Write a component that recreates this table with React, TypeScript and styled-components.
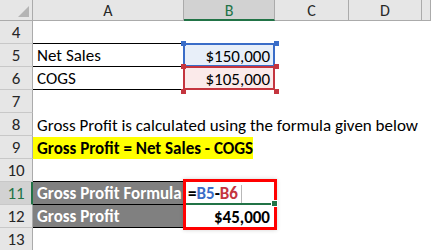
import React from 'react';
import styled, { createGlobalStyle, css } from 'styled-components';

/** Excel-like colours */
const C = {
  headerBg: '#e6e6e6',
  headerActiveBg: '#d2d2d2',
  headerLine: '#ababab',
  rowLine: '#c8c8c8',
  headerText: '#262626',
  green: '#217346',
  text: '#000000',
  blue: '#3a6dc8',
  blueFill: '#e8eff9',
  red: '#c4353f',
  redFill: '#fbeaea',
  gray: '#808080',
  yellow: '#ffff00',
  box: '#ff0000',
};

const FONT = `Calibri, Carlito, 'Liberation Sans', Arial, sans-serif`;

const GlobalStyle = createGlobalStyle`
  html, body {
    margin: 0;
    padding: 0;
    background: #ffffff;
    overflow: hidden;
  }
  body {
    font-family: ${FONT};
  }
`;

/** whole sheet */
const Sheet = styled.div`
  display: grid;
  grid-template-columns: 33px 151px 91px 74px 73px 9px;
  grid-template-rows: 21px repeat(10, 23px);
  width: 431px;
  height: 250px;
  overflow: hidden;
  font-family: ${FONT};
`;

/** top-left corner with the select-all triangle */
const Corner = styled.div`
  background: ${C.headerBg};
  border-right: 1px solid ${C.headerLine};
  border-bottom: 1px solid ${C.headerLine};
  box-sizing: border-box;
  display: flex;
  align-items: flex-end;
  justify-content: flex-end;
  padding: 0 3px 3px 0;
`;

const Triangle = styled.div`
  width: 0;
  height: 0;
  border-left: 11px solid transparent;
  border-bottom: 11px solid #b4b4b4;
`;

/** column header letter */
const ColHeader = styled.div<{ $active?: boolean }>`
  box-sizing: border-box;
  background: ${(p) => (p.$active ? C.headerActiveBg : C.headerBg)};
  border-right: 1px solid ${C.headerLine};
  border-bottom: ${(p) => (p.$active ? `2px solid ${C.green}` : `1px solid ${C.headerLine}`)};
  color: ${(p) => (p.$active ? C.green : C.headerText)};
  font-size: 16px;
  display: flex;
  align-items: center;
  justify-content: center;
  padding-top: ${(p) => (p.$active ? '1px' : '0')};
`;

/** row number */
const RowHeader = styled.div<{ $active?: boolean }>`
  box-sizing: border-box;
  background: ${(p) => (p.$active ? C.headerActiveBg : C.headerBg)};
  border-right: ${(p) => (p.$active ? `2px solid ${C.green}` : `1px solid ${C.headerLine}`)};
  border-bottom: 1px solid ${C.rowLine};
  color: ${(p) => (p.$active ? C.green : C.headerText)};
  font-size: 17px;
  display: flex;
  align-items: center;
  justify-content: center;
  padding-left: ${(p) => (p.$active ? '1px' : '0')};
`;

/** ordinary worksheet cell */
const Cell = styled.div<{
  $line?: boolean;
  $fill?: string;
  $bold?: boolean;
  $color?: string;
  $right?: boolean;
}>`
  position: relative;
  box-sizing: border-box;
  background: ${(p) => p.$fill ?? '#ffffff'};
  color: ${(p) => p.$color ?? C.text};
  font-size: 17px;
  font-weight: ${(p) => (p.$bold ? 700 : 400)};
  white-space: nowrap;
  overflow: visible;
  display: flex;
  align-items: center;
  justify-content: ${(p) => (p.$right ? 'flex-end' : 'flex-start')};
  padding: 1px 5px 0 4px;
  ${(p) =>
    p.$line &&
    css`
      border-bottom: 1px solid #000000;
    `}
`;

/** yellow highlighted formula label that spills into column B */
const Highlight = styled.span`
  background: ${C.yellow};
  font-weight: 700;
  display: flex;
  align-items: center;
  align-self: stretch;
  width: 232px;
  margin-left: -4px;
  padding-left: 4px;
  box-sizing: border-box;
  z-index: 1;
`;

/** coloured reference frame drawn while editing a formula */
const RefFrame = styled.div<{ $tone: string; $fillTone: string }>`
  position: absolute;
  top: -1px;
  left: -1px;
  right: 0;
  bottom: 0;
  border: 2px solid ${(p) => p.$tone};
  background: ${(p) => p.$fillTone};
  z-index: 0;
`;

const Handle = styled.div<{ $tone: string; $x: 'l' | 'r'; $y: 't' | 'b' }>`
  position: absolute;
  width: 5px;
  height: 5px;
  background: ${(p) => p.$tone};
  ${(p) => (p.$x === 'l' ? 'left: -3px;' : 'right: -4px;')}
  ${(p) => (p.$y === 't' ? 'top: -3px;' : 'bottom: -4px;')}
  z-index: 2;
`;

const CellText = styled.span`
  position: relative;
  z-index: 1;
`;

/** the cell being edited */
const EditCell = styled(Cell)`
  border-bottom: 2px solid ${C.green};
  padding-top: 2px;
  z-index: 2;
`;

const Ref = styled.span<{ $tone: string }>`
  color: ${(p) => p.$tone};
`;

const Caret = styled.span`
  display: inline-block;
  width: 1px;
  height: 18px;
  margin-left: 3px;
  background: #b8b8b8;
`;

const FillHandle = styled.div`
  position: absolute;
  right: -3px;
  bottom: -4px;
  width: 5px;
  height: 5px;
  background: ${C.green};
  border: 1px solid #ffffff;
  z-index: 4;
`;

/** red emphasis box around B11:B12, laid over both cells */
const FocusBox = styled.div`
  position: absolute;
  top: -3px;
  left: -1px;
  width: 94px;
  height: 51px;
  box-sizing: border-box;
  border: 3px solid ${C.box};
  box-shadow: 0 0 4px rgba(0, 0, 0, 0.18);
  pointer-events: none;
  z-index: 3;
`;

const COLS = ['A', 'B', 'C', 'D', ''];

export default function App() {
  const blank = (k: string) => <Cell key={k} />;
  const rest = (n: number) => [<Cell key={`c${n}`} />, <Cell key={`d${n}`} />, <Cell key={`e${n}`} />];

  return (
    <>
      <GlobalStyle />
      <Sheet>
        <Corner>
          <Triangle />
        </Corner>
        {COLS.map((c) => (
          <ColHeader key={c || 'E'} $active={c === 'B'}>
            {c}
          </ColHeader>
        ))}

        {/* row 4 */}
        <RowHeader>4</RowHeader>
        <Cell $line />
        {blank('b4')}
        {rest(4)}

        {/* row 5 */}
        <RowHeader>5</RowHeader>
        <Cell $line>Net Sales</Cell>
        <Cell $right>
          <RefFrame $tone={C.blue} $fillTone={C.blueFill} />
          <Handle $tone={C.blue} $x="l" $y="t" />
          <Handle $tone={C.blue} $x="r" $y="t" />
          <CellText>$150,000</CellText>
        </Cell>
        {rest(5)}

        {/* row 6 */}
        <RowHeader>6</RowHeader>
        <Cell $line>COGS</Cell>
        <Cell $right>
          <RefFrame $tone={C.red} $fillTone={C.redFill} />
          <Handle $tone={C.red} $x="l" $y="t" />
          <Handle $tone={C.red} $x="r" $y="t" />
          <Handle $tone={C.red} $x="l" $y="b" />
          <Handle $tone={C.red} $x="r" $y="b" />
          <CellText>$105,000</CellText>
        </Cell>
        {rest(6)}

        {/* row 7 */}
        <RowHeader>7</RowHeader>
        {blank('a7')}
        {blank('b7')}
        {rest(7)}

        {/* row 8 */}
        <RowHeader>8</RowHeader>
        <Cell>
          <CellText>Gross Profit is calculated using the formula given below</CellText>
        </Cell>
        {blank('b8')}
        {rest(8)}

        {/* row 9 */}
        <RowHeader>9</RowHeader>
        <Cell>
          <Highlight>Gross Profit = Net Sales - COGS</Highlight>
        </Cell>
        {blank('b9')}
        {rest(9)}

        {/* row 10 */}
        <RowHeader>10</RowHeader>
        <Cell $line />
        {blank('b10')}
        {rest(10)}

        {/* row 11 */}
        <RowHeader $active>11</RowHeader>
        <Cell $line $fill={C.gray} $bold $color="#ffffff">
          Gross Profit Formula
        </Cell>
        <EditCell $bold>
          <span>=</span>
          <Ref $tone={C.blue}>B5</Ref>
          <span>-</span>
          <Ref $tone={C.red}>B6</Ref>
          <Caret />
          <FillHandle />
          <FocusBox />
        </EditCell>
        {rest(11)}

        {/* row 12 */}
        <RowHeader>12</RowHeader>
        <Cell $line $fill={C.gray} $bold $color="#ffffff">
          Gross Profit
        </Cell>
        <Cell $bold $right>
          $45,000
        </Cell>
        {rest(12)}

        {/* row 13 */}
        <RowHeader>13</RowHeader>
        {blank('a13')}
        {blank('b13')}
        {rest(13)}
      </Sheet>
    </>
  );
}
